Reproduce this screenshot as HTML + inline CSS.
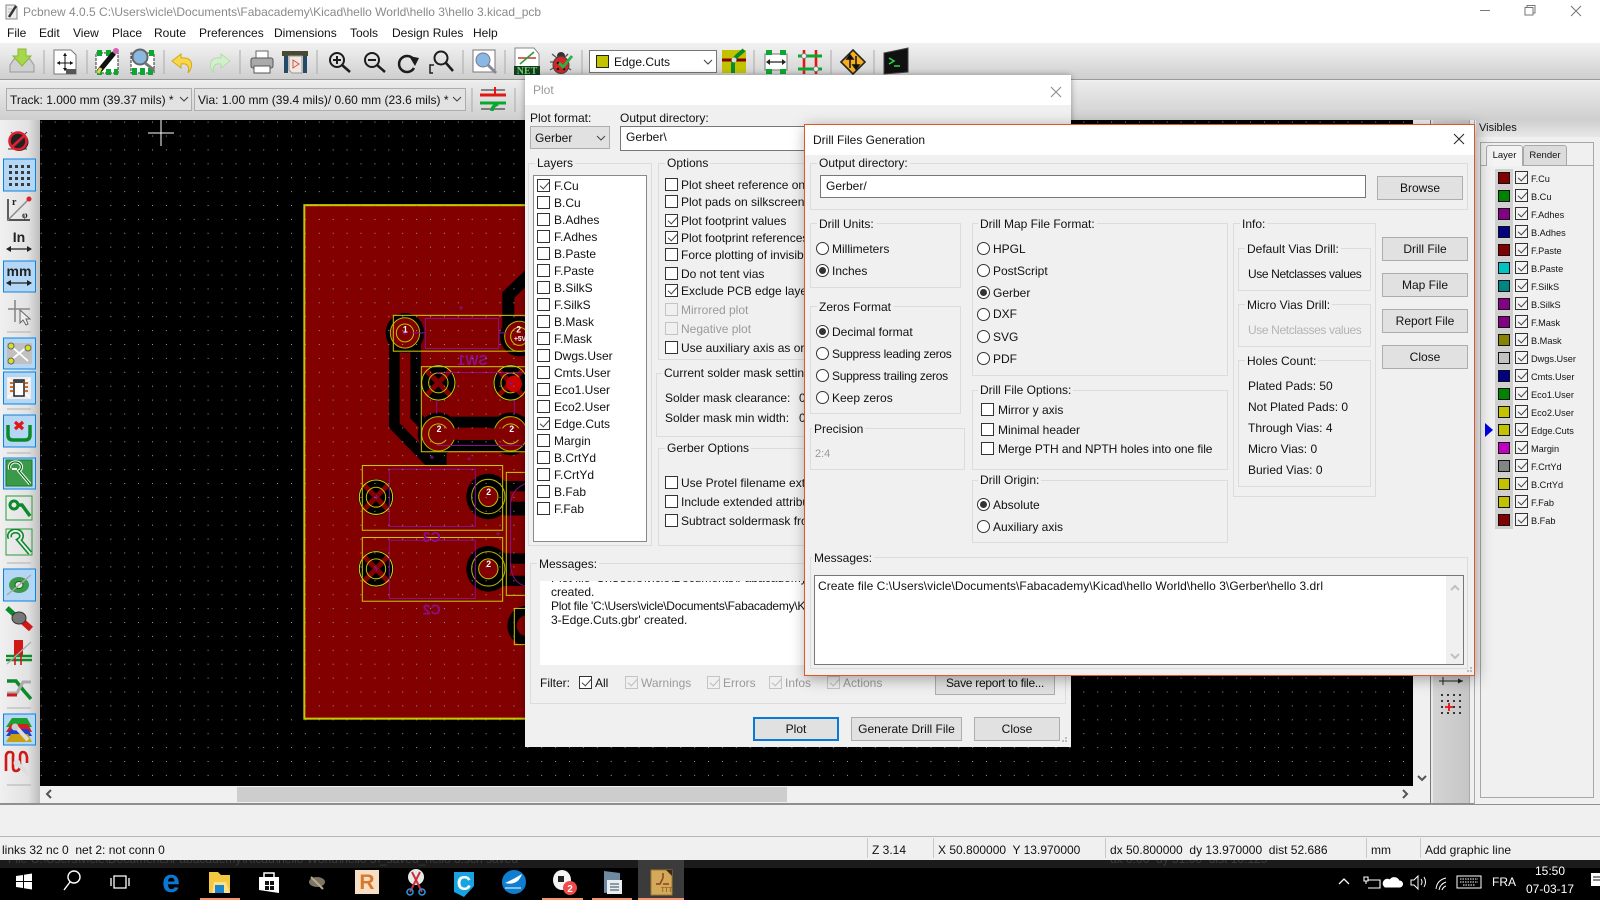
<!DOCTYPE html>
<html><head><meta charset="utf-8"><title>Pcbnew</title>
<style>
html,body{margin:0;padding:0;width:1600px;height:900px;overflow:hidden;background:#f0f0f0}
body{position:relative;font:12px/14px "Liberation Sans",sans-serif;color:#111}
div,span,b,u,s,i{position:absolute;display:block;box-sizing:border-box;text-decoration:none;font-style:normal;font-weight:normal}
svg{position:absolute;left:0;top:0}
.t{white-space:nowrap;height:14px}
.g{border:1px solid #dcdcdc}
.l{white-space:nowrap;background:#f0f0f0;padding:0 2px;height:14px}
.c{width:13px;height:13px;background:#fff;border:1px solid #333}
.c.x::after{content:"";position:absolute;left:3.5px;top:0;width:4px;height:8px;border:solid #444;border-width:0 1.3px 1.3px 0;transform:rotate(42deg)}
.c.d{border-color:#c4c4c4;background:#f0f0f0}
.c.d::after{border-color:#bbb}
.r{width:13px;height:13px;border-radius:50%;background:#fff;border:1px solid #333}
.r.o::after{content:"";position:absolute;left:2px;top:2px;width:7px;height:7px;border-radius:50%;background:#333}
.btn{background:#e1e1e1;border:1px solid #adadad;text-align:center;line-height:22px;white-space:nowrap}
.gy{color:#9a9a9a}
.sw{left:1498px;width:12px;height:12px;border:1px solid #111;outline:3px solid #cfcfcf}
.k{left:1515px;width:13px;height:13px;border:1px solid #333;background:#f4f4f4}
.k::after{content:"";position:absolute;left:3.5px;top:0;width:4px;height:8px;border:solid #444;border-width:0 1.2px 1.2px 0;transform:rotate(42deg)}
.p{left:1531px;font-size:9.2px;margin-top:1px;white-space:nowrap;height:14px}
.st{font-size:12px}
.n{letter-spacing:-.27px}
</style></head><body>

<div style="left:0;top:0;width:1600px;height:43px;background:#fff"></div>
<div class="t" style="left:23px;top:5px;color:#8a8a8a;font-size:12px">Pcbnew 4.0.5 C:\Users\vicle\Documents\Fabacademy\Kicad\hello World\hello 3\hello 3.kicad_pcb</div>
<div class="t" style="left:7px;top:26px">File</div>
<div class="t" style="left:39px;top:26px">Edit</div>
<div class="t" style="left:73px;top:26px">View</div>
<div class="t" style="left:112px;top:26px">Place</div>
<div class="t" style="left:154px;top:26px">Route</div>
<div class="t" style="left:199px;top:26px">Preferences</div>
<div class="t" style="left:274px;top:26px">Dimensions</div>
<div class="t" style="left:350px;top:26px">Tools</div>
<div class="t" style="left:392px;top:26px">Design Rules</div>
<div class="t" style="left:473px;top:26px">Help</div>

<div style="left:0;top:43px;width:1600px;height:37px;background:linear-gradient(#f2f2f2,#cfcfcf);border-bottom:1px solid #9a9a9a"></div>
<div style="left:0;top:81px;width:1600px;height:39px;background:linear-gradient(#ececec,#cfcfcf)"></div>
<div style="left:6px;top:88px;width:186px;height:23px;background:#e2e2e2;border:1px solid #adadad"></div>
<div class="t" style="left:10px;top:93px">Track: 1.000 mm (39.37 mils) *</div>
<div style="left:194px;top:88px;width:272px;height:23px;background:#e2e2e2;border:1px solid #adadad"></div>
<div class="t" style="left:198px;top:93px">Via: 1.00 mm (39.4 mils)/ 0.60 mm (23.6 mils) *</div>
<div style="left:589px;top:50px;width:128px;height:23px;background:#fff;border:1px solid #777"></div>
<div style="left:596px;top:55px;width:13px;height:13px;background:#c2c200;border:1px solid #222"></div>
<div class="t" style="left:614px;top:55px">Edge.Cuts</div>

<!-- left toolbar -->
<div style="left:0;top:120px;width:40px;height:684px;background:linear-gradient(90deg,#f0f0f0,#e2e2e2 70%,#bdbdbd)"></div>
<!-- scrollbars and right toolbar -->
<div style="left:40px;top:786px;width:1390px;height:17px;background:#f0f0f0"></div>
<div style="left:237px;top:787px;width:550px;height:15px;background:#cdcdcd"></div>
<div style="left:1413px;top:120px;width:17px;height:683px;background:#f0f0f0"></div>
<div style="left:1430px;top:120px;width:3px;height:683px;background:#e8e8e8;border-left:1px solid #777"></div>
<div style="left:1433px;top:120px;width:37px;height:683px;background:linear-gradient(90deg,#d4d4d4,#c6c6c6);border-right:1px solid #aaa"></div>
<div style="left:0;top:803px;width:1600px;height:2px;background:#8f8f8f"></div>
<div style="left:0;top:805px;width:1600px;height:31px;background:#f0f0f0"></div>
<div style="left:0;top:836px;width:1600px;height:1px;background:#b5b5b5"></div>
<div style="left:0;top:837px;width:1600px;height:23px;background:#f0f0f0"></div>

<!-- canvas + icons -->
<svg width="1600" height="900" viewBox="0 0 1600 900">
<defs>
<pattern id="dots" x="291" y="205" width="13.9" height="13.9" patternUnits="userSpaceOnUse"><rect width="1" height="1" fill="#8f9f98"/></pattern>
<g id="th"><circle r="53" fill="#000"/><path d="M-40,-40L40,40M40,-40L-40,40" stroke="#820000" stroke-width="15"/><circle r="50" fill="none" stroke="#d8d800" stroke-width="3"/><circle r="29" fill="none" stroke="#c2c200" stroke-width="3"/></g>
<g id="pd"><circle r="66" fill="#000"/><circle r="28" fill="#820000"/><circle r="50" fill="none" stroke="#b4b400" stroke-width="3"/><circle r="29" fill="none" stroke="#c2c200" stroke-width="3"/></g>
</defs>
<rect x="40" y="120" width="1373" height="666" fill="#000"/>
<g transform="translate(290,190) scale(.3333,.3444)">
<rect x="43" y="44" width="760" height="1491" fill="#820000" stroke="#c8c800" stroke-width="6"/>
<path d="M345,415V670L425,750H470" fill="none" stroke="#000" stroke-width="96"/>
<path d="M345,415V670L425,750H470" fill="none" stroke="#820000" stroke-width="32"/>
<path d="M445,708H720" fill="none" stroke="#000" stroke-width="100"/>
<path d="M445,708H720" fill="none" stroke="#820000" stroke-width="36"/>
<path d="M725,240L655,305V420" fill="none" stroke="#000" stroke-width="36"/>
<rect x="640" y="845" width="90" height="30" fill="#000"/><rect x="640" y="905" width="90" height="40" fill="#000"/>
<rect x="640" y="1055" width="90" height="30" fill="#000"/><rect x="640" y="1120" width="90" height="30" fill="#000"/>
<circle cx="345" cy="415" r="58" fill="#000"/><circle cx="345" cy="415" r="44" fill="#820000" stroke="#b4b400" stroke-width="3"/><circle cx="345" cy="415" r="26" fill="none" stroke="#c2c200" stroke-width="3"/>
<circle cx="688" cy="425" r="58" fill="#000"/><circle cx="688" cy="425" r="44" fill="#820000" stroke="#b4b400" stroke-width="3"/><circle cx="688" cy="425" r="26" fill="none" stroke="#c2c200" stroke-width="3"/>
<use href="#th" x="445" y="560"/><use href="#th" x="662" y="560"/>
<circle cx="672" cy="563" r="24" fill="#c80000"/>
<circle cx="445" cy="708" r="62" fill="#000"/><circle cx="445" cy="708" r="50" fill="#820000" stroke="#b4b400" stroke-width="3"/><circle cx="445" cy="708" r="29" fill="none" stroke="#c2c200" stroke-width="3"/>
<circle cx="662" cy="708" r="62" fill="#000"/><circle cx="662" cy="708" r="50" fill="#820000" stroke="#b4b400" stroke-width="3"/><circle cx="662" cy="708" r="29" fill="none" stroke="#c2c200" stroke-width="3"/>
<path d="M445,692H720V725H445Z" fill="#820000"/>
<use href="#th" x="258" y="892"/><use href="#th" x="258" y="1100"/>
<use href="#pd" x="595" y="890"/><use href="#pd" x="595" y="1100"/>
<circle cx="710" cy="1265" r="58" fill="#000"/><circle cx="710" cy="1265" r="30" fill="#820000"/>
<g fill="none" stroke="#c8c800" stroke-width="3">
<rect x="310" y="364" width="430" height="104"/><rect x="394" y="513" width="340" height="247"/>
<rect x="217" y="800" width="421" height="188"/><rect x="217" y="1009" width="421" height="185"/>
<rect x="649" y="820" width="90" height="357"/><rect x="673" y="1215" width="70" height="105"/>
</g>
<g fill="none" stroke="#8a108a" stroke-width="3">
<rect x="406" y="373" width="220" height="87"/><rect x="298" y="811" width="258" height="166"/><rect x="298" y="1017" width="258" height="169"/>
<path d="M440,530H700M440,742H700M440,610V650M673,610V650M365,415H406M626,415H650"/>
<path d="M730,845Q665,860 662,910V1090Q665,1150 730,1155"/>
<path d="M507,342h12M513,336v12M420,776h12M426,770v12M531,781h12M537,775v12M618,998h12M624,992v12M252,892h14M259,885v14M252,1100h14M259,1093v14M337,415h14M344,408v14M656,562h14M663,555v14"/>
</g>
<g fill="#8a108a" font-family="Liberation Sans" font-size="42" font-weight="bold" text-anchor="middle">
<text transform="translate(548,478) scale(-1,1)" dy="30">SW1</text>
<text transform="translate(425,990) scale(-1,1)" dy="32">C3</text>
<text transform="translate(425,1200) scale(-1,1)" dy="32">C2</text>
</g>
<g fill="#fff" font-family="Liberation Sans" font-size="26" font-weight="bold" text-anchor="middle">
<text x="346" y="414">1</text><text x="686" y="414">2</text><text x="447" y="702">2</text><text x="665" y="702">2</text><text x="596" y="886">2</text><text x="596" y="1094">2</text>
<text x="690" y="438" font-size="20">+5V</text>
</g>
</g>
<rect x="40" y="120" width="1373" height="666" fill="url(#dots)"/>
<!-- cursor -->
<path d="M148,133H174M161,120V146" stroke="#fff" stroke-width="1"/>

<!-- scroll arrows -->
<g fill="none" stroke="#555" stroke-width="2">
<path d="M51,790l-4,4l4,4M1403,790l4,4l-4,4"/><path d="M1418,776l4,4l4,-4"/>
</g>
<!-- top toolbar separators -->
<g stroke="#aaa"><path d="M44,50V74M87,50V74M164,50V74M240,50V74M317,50V74M463,50V74M505,50V74M582,50V74M754,50V74M831,50V74M874,50V74M472,88V112M515,88V112"/></g>
<!-- combos chevrons -->
<g fill="none" stroke="#444" stroke-width="1.1"><path d="M180,97l4,4l4,-4M453,97l4,4l4,-4M704,60l4,4l4,-4"/></g>

<!-- load -->
<g transform="translate(22,61)"><path d="M-12,4L-8,-2H8L12,4V11H-12Z" fill="#d0d0d0" stroke="#999"/><path d="M-4,-12H4V-5H9L0,5L-9,-5H-4Z" fill="#a6d84a" stroke="#88b838"/></g>
<!-- page -->
<g transform="translate(65,62)"><path d="M-11,-12H6L11,-7V12H-11Z" fill="#fff" stroke="#777"/><path d="M-8,1H8M0,-9V9" stroke="#111"/><path d="M-8,1l3,-2v4zM8,1l-3,-2v4zM0,-9l-2,3h4zM0,9l-2,-3h4z" fill="#111"/><rect x="1" y="7" width="10" height="5" fill="#555"/></g>
<!-- pcb edit -->
<g transform="translate(107,62)"><rect x="-11" y="-9" width="22" height="20" fill="#fff" stroke="#333" stroke-dasharray="3 1"/><path d="M-10,-12h5v6h-5zM-1,-12h5v6h-5zM-10,7h5v6h-5zM-1,7h5v6h-5zM7,7h4v6h-4z" fill="#0ba82f"/><path d="M-7,8L7,-9" stroke="#111" stroke-width="5"/><path d="M-9,11l3,-5" stroke="#e8d24a" stroke-width="3"/><circle cx="9" cy="-11" r="3" fill="#d45fb0"/></g>
<!-- pcb zoom -->
<g transform="translate(142,62)"><rect x="-11" y="-9" width="23" height="20" fill="#fff" stroke="#333" stroke-dasharray="3 1"/><path d="M-10,6h5v7h-5zM-2,6h5v7h-5zM6,6h5v7h-5zM7,-12h5v6h-5z" fill="#0ba82f"/><circle cx="-2" cy="-5" r="7.5" fill="#8ab8e0" stroke="#666" stroke-width="2"/><path d="M3,1L12,8" stroke="#777" stroke-width="3"/></g>
<!-- undo/redo -->
<g transform="translate(183,63)"><path d="M-2,-9L-11,-2L-2,5V1C4,0 7,3 5,10C11,3 10,-6 -2,-5Z" fill="#f6d848" stroke="#d0a820"/></g>
<g transform="translate(219,63)"><path d="M2,-9L11,-2L2,5V1C-4,0 -7,3 -5,10C-11,3 -10,-6 2,-5Z" fill="#d3f0cc" stroke="#b0dca8"/></g>
<!-- print -->
<g transform="translate(262,62)"><rect x="-6" y="-11" width="12" height="8" fill="#fff" stroke="#666"/><rect x="-11" y="-4" width="22" height="10" rx="2" fill="#aaa" stroke="#555"/><rect x="-8" y="4" width="16" height="7" fill="#fff" stroke="#555"/></g>
<!-- plotter -->
<g transform="translate(295,62)"><rect x="-13" y="-11" width="26" height="5" fill="#4a4a32"/><rect x="-11" y="-6" width="4" height="17" fill="#234a66"/><rect x="8" y="-6" width="4" height="17" fill="#234a66"/><path d="M-6,-6H7V11H-3L-6,8Z" fill="#f2e8e0" stroke="#999"/><path d="M-2,-2l6,4l-6,4z" fill="none" stroke="#c55"/></g>
<!-- zooms -->
<g fill="none" stroke="#1c1c1c"><g transform="translate(337,60)"><circle r="7" stroke-width="2"/><path d="M-4,0H4M0,-4V4" stroke-width="2"/><path d="M5,5L13,12" stroke-width="2.5"/></g>
<g transform="translate(372,60)"><circle r="7" stroke-width="2"/><path d="M-4,0H4" stroke-width="2"/><path d="M5,5L13,12" stroke-width="2.5"/></g>
<g transform="translate(407,63)"><path d="M7,-3A8,8 0 1 0 7,5" stroke-width="2.5"/><path d="M2,-7L12,-5L8,3Z" fill="#1c1c1c" stroke="none"/></g>
<g transform="translate(441,61)"><circle cy="-3" r="6.5" stroke-width="2"/><path d="M5,2L12,10" stroke-width="2.5"/><path d="M-7,4H-11V12H-8M-1,12" stroke-width="1.5"/></g></g>
<!-- find -->
<g transform="translate(484,61)"><rect x="-11" y="-11" width="22" height="22" fill="#fff" stroke="#777"/><circle cx="-1" cy="-1" r="7" fill="#8ab8e4" stroke="#778"/><path d="M4,4L12,12" stroke="#889" stroke-width="3"/></g>
<!-- NET -->
<g transform="translate(527,60)"><path d="M-12,-12H7L12,-6V7H-12Z" fill="#fff" stroke="#888"/><path d="M-9,-2H9" stroke="#c33" stroke-width="1.5"/><path d="M-7,4L7,-8" stroke="#2a9a3a" stroke-width="1.5"/><rect x="-13" y="6" width="26" height="9" fill="#143c1e"/><text x="0" y="14" font-family="Liberation Serif" font-size="10" font-weight="bold" fill="#6fd36f" text-anchor="middle">NET</text></g>
<!-- bug -->
<g transform="translate(561,62)"><path d="M-9,-8L-4,-4M7,-8L3,-4M-11,0H-6M-11,8L-6,5M10,8L6,5" stroke="#555" stroke-width="1.3"/><circle cy="-6" r="4" fill="#333"/><ellipse cy="3" rx="8" ry="8.5" fill="#d42626" stroke="#444"/><circle cx="-3" cy="1" r="1.3" fill="#111"/><circle cx="-3" cy="7" r="1.3" fill="#111"/><circle cx="3" cy="7" r="1.3" fill="#111"/><path d="M-2,1L2,5L11,-6" fill="none" stroke="#2bb045" stroke-width="2.8"/></g>
<!-- track icon -->
<g transform="translate(722,50)"><rect width="24" height="23" fill="#c2c200"/><path d="M0,10H24" stroke="#840000" stroke-width="3"/><path d="M11,23V14Q11,10 15,6L22,0" fill="none" stroke="#0b8a2a" stroke-width="4"/><circle cx="12" cy="10" r="2.5" fill="#ddd"/></g>
<!-- pad resize -->
<g transform="translate(776,62)"><rect x="-11" y="-8" width="22" height="16" fill="#fff" stroke="#777"/><path d="M-10,-12h6v5h-6zM4,-12h6v5h-6zM-10,7h6v5h-6zM4,7h6v5h-6z" fill="#0ba82f"/><path d="M-9,0H9" stroke="#222" stroke-width="1.3"/><path d="M-10,0l4,-3v6zM10,0l-4,-3v6z" fill="#222"/></g>
<!-- ratsnest grid -->
<g transform="translate(810,62)"><path d="M-6,-12V12M6,-12V12" stroke="#e31616" stroke-width="2.6"/><path d="M-12,-6H12M-12,7H12" stroke="#0ba82f" stroke-width="3"/><circle cx="-6" cy="-6" r="2.5" fill="#eee" stroke="#777"/><circle cx="6" cy="7" r="2.5" fill="#eee" stroke="#777"/></g>
<!-- diamond -->
<g transform="translate(853,62)"><rect x="-8.5" y="-8.5" width="17" height="17" transform="rotate(45)" fill="#f6ae1a" stroke="#222" stroke-width="1.6"/><path d="M-3,6V-6M-3,-7l-3,4h6zM3,-6V6M3,7l-3,-4h6z" stroke="#111" stroke-width="1.5" fill="#111"/></g>
<!-- terminal -->
<g transform="translate(896,61)"><path d="M-12,-8L12,-13V11L-12,13Z" fill="#111" stroke="#444"/><path d="M-7,-3L-2,0L-7,3M-2,5H4" fill="none" stroke="#2fd34a" stroke-width="1.6"/></g>
<!-- DRC switch -->
<g transform="translate(493,99)"><path d="M-12,-9H12M-12,10H12" stroke="#222"/><path d="M-13,-4H13" stroke="#e31616" stroke-width="3"/><path d="M-13,4H13" stroke="#0ba82f" stroke-width="3"/><path d="M2,-12V-5" stroke="#e31616" stroke-width="2"/><path d="M-1,12Q-1,7 5,5" stroke="#0ba82f" stroke-width="3.5" fill="none"/></g>

<!-- left toolbar frames -->
<g fill="#b4d7f6" stroke="#0a84e0" stroke-width="1">
<rect x="3.5" y="159" width="32" height="32"/><rect x="3.5" y="261" width="32" height="31"/><rect x="3.5" y="338" width="32" height="31"/><rect x="3.5" y="372" width="32" height="32"/>
<rect x="3.5" y="415" width="32" height="32"/><rect x="3.5" y="458" width="32" height="31"/><rect x="3.5" y="569" width="32" height="32"/><rect x="3.5" y="714" width="32" height="31"/>
</g>
<g stroke="#b0b0b0"><path d="M7,332H31M7,409H31M7,453H31M7,563H31M7,708H31M7,785H31"/></g>
<!-- bug off -->
<g transform="translate(19,141)"><path d="M-8,-9L-4,-5M8,-9L4,-5M-11,8L8,8" stroke="#555" stroke-width="1.2"/><ellipse cy="1" rx="9.5" ry="9" fill="#222"/><circle cx="-1" r="8.5" fill="none" stroke="#e02030" stroke-width="2.6"/><path d="M-7,6L6,-6" stroke="#e02030" stroke-width="2.6"/></g>
<!-- grid -->
<g transform="translate(19,175)" fill="#3a3a3a"><path d="M-10,-10h3v3h-3zM-4,-10h3v3h-3zM2,-10h3v3h-3zM8,-10h3v3h-3zM-10,-4h3v3h-3zM-4,-4h3v3h-3zM2,-4h3v3h-3zM8,-4h3v3h-3zM-10,2h3v3h-3zM-4,2h3v3h-3zM2,2h3v3h-3zM8,2h3v3h-3zM-10,8h3v3h-3zM-4,8h3v3h-3zM2,8h3v3h-3zM8,8h3v3h-3z"/></g>
<!-- polar -->
<g transform="translate(19,209)"><path d="M-11,-10V11H11" fill="none" stroke="#222" stroke-width="1.4"/><path d="M-11,11L9,-9" stroke="#888" stroke-width="1.4"/><circle cx="10" cy="-10" r="2.5" fill="#e02020"/><text x="-7" y="-4" font-family="Liberation Serif" font-size="10" font-weight="bold" fill="#222">r</text><text x="3" y="9" font-family="Liberation Serif" font-size="9" font-weight="bold" fill="#222">φ</text></g>
<!-- In -->
<g transform="translate(19,242)"><text x="0" y="0" font-family="Liberation Sans" font-size="14" font-weight="bold" fill="#222" text-anchor="middle">In</text><path d="M-12,7H12" stroke="#222" stroke-width="1.3"/><path d="M-13,7l5,-3v6zM13,7l-5,-3v6z" fill="#222"/></g>
<!-- mm -->
<g transform="translate(19,276)"><text x="0" y="0" font-family="Liberation Sans" font-size="14" font-weight="bold" fill="#222" text-anchor="middle">mm</text><path d="M-12,7H12" stroke="#222" stroke-width="1.3"/><path d="M-13,7l5,-3v6zM13,7l-5,-3v6z" fill="#222"/></g>
<!-- cursor tool -->
<g transform="translate(19,312)"><path d="M-11,-3H11M-4,-12V10" stroke="#888" stroke-width="1.6"/><path d="M1,-2V11L4,8L7,13L9,12L7,7H11Z" fill="#eee" stroke="#666"/></g>
<!-- ratsnest -->
<g transform="translate(19,353)"><rect x="-12" y="-10" width="25" height="21" fill="#c0c0c0"/><path d="M-8,-7L9,8M8,-6L-8,7" stroke="#fff" stroke-width="1.8"/><circle cx="-8" cy="-7" r="3" fill="#d8e020" stroke="#666"/><circle cx="9" cy="-5" r="3" fill="#d8e020" stroke="#666"/><circle cx="-8" cy="8" r="3" fill="#d8e020" stroke="#666"/></g>
<!-- module ratsnest -->
<g transform="translate(19,388)"><rect x="-12" y="-11" width="24" height="22" fill="#eee"/><path d="M-11,-9L-5,-5M11,-9L5,-5M-11,9L-5,5M11,9L5,5" stroke="#fff" stroke-width="1.4"/><rect x="-5" y="-8" width="10" height="16" fill="#fff" stroke="#222" stroke-width="1.5"/><rect x="-4" y="-8" width="8" height="3" fill="#444"/><path d="M-9,-5h3M-9,-1h3M-9,3h3M6,-5h3M6,-1h3M6,3h3" stroke="#d86b1c" stroke-width="2"/></g>
<!-- del track -->
<g transform="translate(19,431)"><path d="M-11,-6V4Q-11,9 -6,9H6Q11,9 11,4V-6" fill="none" stroke="#0b8a2a" stroke-width="3.5"/><path d="M-4,-9L4,-2M4,-9L-4,-2" stroke="#e31616" stroke-width="3.2"/></g>
<!-- zone icons -->
<g transform="translate(19,473)"><rect x="-13" y="-13" width="26" height="26" fill="#3a9a4a" stroke="#1a7a2a"/><path d="M-9,-4A6,5 0 1 1 0,-2L11,11" fill="none" stroke="#fff" stroke-width="3.2"/><path d="M-7,-4h5" stroke="#fff" stroke-width="2"/><path d="M-9,-4A6,5 0 1 1 0,-2L11,11" fill="none" stroke="#0a6a1a" stroke-width="1.2"/></g>
<g transform="translate(19,508)"><rect x="-13" y="-12" width="26" height="24" fill="none" stroke="#2a9a3a"/><circle cx="-5" cy="-3" r="4" fill="none" stroke="#0b8a2a" stroke-width="3"/><path d="M-1,-3H3L11,8" fill="none" stroke="#0b8a2a" stroke-width="3.4"/></g>
<g transform="translate(19,542)"><rect x="-13" y="-13" width="26" height="26" fill="none" stroke="#2a9a3a"/><path d="M-9,-4A6,5 0 1 1 0,-2L11,11" fill="none" stroke="#0b8a2a" stroke-width="5"/><path d="M-9,-4A6,5 0 1 1 0,-2L11,11" fill="none" stroke="#eee" stroke-width="1.8"/></g>
<!-- via etc -->
<g transform="translate(19,585)"><ellipse rx="10" ry="8" fill="#3d9a4b"/><ellipse rx="4" ry="3.5" fill="#e8e8e8" stroke="#0b6a1a"/><path d="M-12,10L12,-10" stroke="#aaa" stroke-width="1.4"/></g>
<g transform="translate(19,618)"><path d="M-12,-10L-1,0" stroke="#0b8a2a" stroke-width="5"/><path d="M1,1L12,11" stroke="#d01818" stroke-width="6"/><ellipse cy="0" rx="7" ry="6" fill="#777" stroke="#333"/></g>
<g transform="translate(19,653)"><rect x="-5" y="-13" width="9" height="15" fill="#d01818"/><path d="M-13,3H13M-13,7H13" stroke="#0b8a2a" stroke-width="2.4"/><path d="M-4,2V12M2,2V12" stroke="#d01818" stroke-width="1.6"/><path d="M-12,11L12,-11" stroke="#aaa" stroke-width="1.2"/></g>
<g transform="translate(19,688)"><path d="M-12,-7H-3L5,3L12,11" fill="none" stroke="#0b8a2a" stroke-width="3.5"/><path d="M-12,5H-2L4,-6H12" fill="none" stroke="#aaa" stroke-width="3"/><path d="M-12,7H-2" stroke="#d01818" stroke-width="3"/></g>
<!-- layers + wrench -->
<g transform="translate(19,730)"><path d="M-13,-3L-7,-12H8L13,-3Z" fill="#1ba030"/><path d="M-13,2L-8,-6H9L13,2Z" fill="#d02020"/><path d="M-13,6L-8,-1H9L13,6Z" fill="#2040d0"/><path d="M-13,12L-8,4H9L13,12Z" fill="#c8a010"/><path d="M-3,-3L9,10" stroke="#ddd" stroke-width="4"/><circle cx="-4" cy="-3" r="3.5" fill="#ccc"/></g>
<g transform="translate(19,763)"><path d="M-13,8V-6Q-13,-11 -9,-11T-6,-6V4Q-6,8 -3,8T1,4V-6Q1,-11 4,-11T8,-6V0" fill="none" stroke="#d01818" stroke-width="2.6"/><path d="M-2,0L10,12" stroke="#ddd" stroke-width="4"/><circle cx="-2" cy="0" r="3.5" fill="#ddd"/></g>
<!-- right toolbar icons -->
<g transform="translate(1451,681)"><path d="M-12,0H12M-8,-4V4" stroke="#222"/><path d="M12,0l-5,-2.5v5z" fill="#222"/></g>
<g transform="translate(1451,704)" fill="#333"><path d="M-10,-10h2v2h-2zM-4,-10h2v2h-2zM2,-10h2v2h-2zM8,-10h2v2h-2zM-10,-4h2v2h-2zM-4,-4h2v2h-2zM2,-4h2v2h-2zM8,-4h2v2h-2zM-10,2h2v2h-2zM2,2h2v2h-2zM8,2h2v2h-2zM-10,8h2v2h-2zM-4,8h2v2h-2zM2,8h2v2h-2zM8,8h2v2h-2z"/><path d="M-6,3H2M-2,-1V7" stroke="#e31616" stroke-width="1.8"/></g>
<!-- app icon -->
<g transform="translate(11,12)"><path d="M-5,-7H4L6,-5V7H-5Z" fill="#eee" stroke="#888"/><path d="M-2,5L5,-6" stroke="#333" stroke-width="2.5"/><path d="M-3,-3h4M-3,0h3" stroke="#bbb"/></g>
<!-- window controls -->
<g stroke="#777" fill="none"><path d="M1480,10.5H1490"/><path d="M1525,7.5H1533V15H1525ZM1527,7.5V5.5H1535V13H1533"/><path d="M1571,6L1581,16M1581,6L1571,16"/></g>
</svg>

<!-- status -->
<div class="t st" style="left:2px;top:843px">links 32 nc 0&nbsp; net 2: not conn 0</div>
<div style="left:867px;top:838px;width:1px;height:20px;background:#c8c8c8"></div>
<div class="t st" style="left:872px;top:843px">Z 3.14</div>
<div style="left:933px;top:838px;width:1px;height:20px;background:#c8c8c8"></div>
<div class="t st" style="left:938px;top:843px">X 50.800000&nbsp; Y 13.970000</div>
<div style="left:1105px;top:838px;width:1px;height:20px;background:#c8c8c8"></div>
<div class="t st" style="left:1110px;top:843px">dx 50.800000&nbsp; dy 13.970000&nbsp; dist 52.686</div>
<div style="left:1366px;top:838px;width:1px;height:20px;background:#c8c8c8"></div>
<div class="t st" style="left:1371px;top:843px">mm</div>
<div style="left:1420px;top:838px;width:1px;height:20px;background:#c8c8c8"></div>
<div class="t st" style="left:1425px;top:843px">Add graphic line</div>

<!-- visibles -->
<div style="left:1474px;top:120px;width:126px;height:684px;background:#f0f0f0;border-left:1px solid #aaa"></div>
<div style="left:1476px;top:120px;width:124px;height:17px;background:linear-gradient(#cfcfcf,#e8e8e8)"></div>
<div class="t" style="left:1479px;top:121px;font-size:11px">Visibles</div>
<div style="left:1480px;top:142px;width:114px;height:656px;border:1px solid #a8a8a8"></div>
<div style="left:1480px;top:165px;width:114px;height:1px;background:#a8a8a8"></div>
<div style="left:1486px;top:145px;width:37px;height:21px;background:#f4f4f4;border:1px solid #a8a8a8;border-bottom:0;border-radius:3px 3px 0 0;font-size:9.5px;line-height:20px;text-align:center">Layer</div>
<div style="left:1523px;top:145px;width:44px;height:20px;background:#dcdcdc;border:1px solid #a8a8a8;border-bottom:0;border-radius:3px 3px 0 0;font-size:9.5px;line-height:19px;text-align:center">Render</div>
<div style="left:1485px;top:423px;width:0;height:0;border-left:8px solid #0000e0;border-top:7px solid transparent;border-bottom:7px solid transparent"></div>

<s class="sw" style="top:172px;background:#840000"></s><i class="k" style="top:171px"></i><span class="p" style="top:171px">F.Cu</span>
<s class="sw" style="top:190px;background:#008400"></s><i class="k" style="top:189px"></i><span class="p" style="top:189px">B.Cu</span>
<s class="sw" style="top:208px;background:#840084"></s><i class="k" style="top:207px"></i><span class="p" style="top:207px">F.Adhes</span>
<s class="sw" style="top:226px;background:#000084"></s><i class="k" style="top:225px"></i><span class="p" style="top:225px">B.Adhes</span>
<s class="sw" style="top:244px;background:#840000"></s><i class="k" style="top:243px"></i><span class="p" style="top:243px">F.Paste</span>
<s class="sw" style="top:262px;background:#00c2c2"></s><i class="k" style="top:261px"></i><span class="p" style="top:261px">B.Paste</span>
<s class="sw" style="top:280px;background:#008484"></s><i class="k" style="top:279px"></i><span class="p" style="top:279px">F.SilkS</span>
<s class="sw" style="top:298px;background:#840084"></s><i class="k" style="top:297px"></i><span class="p" style="top:297px">B.SilkS</span>
<s class="sw" style="top:316px;background:#840084"></s><i class="k" style="top:315px"></i><span class="p" style="top:315px">F.Mask</span>
<s class="sw" style="top:334px;background:#848400"></s><i class="k" style="top:333px"></i><span class="p" style="top:333px">B.Mask</span>
<s class="sw" style="top:352px;background:#c2c2c2"></s><i class="k" style="top:351px"></i><span class="p" style="top:351px">Dwgs.User</span>
<s class="sw" style="top:370px;background:#000084"></s><i class="k" style="top:369px"></i><span class="p" style="top:369px">Cmts.User</span>
<s class="sw" style="top:388px;background:#008400"></s><i class="k" style="top:387px"></i><span class="p" style="top:387px">Eco1.User</span>
<s class="sw" style="top:406px;background:#c2c200"></s><i class="k" style="top:405px"></i><span class="p" style="top:405px">Eco2.User</span>
<s class="sw" style="top:424px;background:#c2c200"></s><i class="k" style="top:423px"></i><span class="p" style="top:423px">Edge.Cuts</span>
<s class="sw" style="top:442px;background:#c200c2"></s><i class="k" style="top:441px"></i><span class="p" style="top:441px">Margin</span>
<s class="sw" style="top:460px;background:#848484"></s><i class="k" style="top:459px"></i><span class="p" style="top:459px">F.CrtYd</span>
<s class="sw" style="top:478px;background:#c2c200"></s><i class="k" style="top:477px"></i><span class="p" style="top:477px">B.CrtYd</span>
<s class="sw" style="top:496px;background:#c2c200"></s><i class="k" style="top:495px"></i><span class="p" style="top:495px">F.Fab</span>
<s class="sw" style="top:514px;background:#840000"></s><i class="k" style="top:513px"></i><span class="p" style="top:513px">B.Fab</span>

<!-- PLOT dialog -->
<div style="left:525px;top:75px;width:546px;height:672px;background:#f0f0f0;box-shadow:0 0 6px rgba(0,0,0,.35)"></div>
<div style="left:525px;top:75px;width:546px;height:30px;background:#fff"></div>
<div class="t" style="left:533px;top:83px;color:#999">Plot</div>
<svg width="1600" height="110"><path d="M1051,87L1061,97M1061,87L1051,97" stroke="#888" fill="none"/></svg>
<div class="t" style="left:530px;top:111px">Plot format:</div>
<div class="t" style="left:620px;top:111px">Output directory:</div>
<div style="left:530px;top:126px;width:80px;height:23px;background:#e1e1e1;border:1px solid #adadad"></div>
<div class="t" style="left:535px;top:131px">Gerber</div>
<svg width="1600" height="150"><path d="M597,136l4,4l4,-4" fill="none" stroke="#444"/></svg>
<div style="left:620px;top:126px;width:300px;height:25px;background:#fff;border:1px solid #777"></div>
<div class="t" style="left:626px;top:130px">Gerber\</div>

<u class="g" style="left:528px;top:163px;width:124px;height:383px"></u>
<span class="l" style="left:535px;top:156px">Layers</span>
<div style="left:533px;top:175px;width:114px;height:367px;background:#fff;border:1px solid #8a8a8a"></div>
<b class="c x" style="left:537px;top:179px"></b><span class="t" style="left:554px;top:179px">F.Cu</span>
<b class="c" style="left:537px;top:196px"></b><span class="t" style="left:554px;top:196px">B.Cu</span>
<b class="c" style="left:537px;top:213px"></b><span class="t" style="left:554px;top:213px">B.Adhes</span>
<b class="c" style="left:537px;top:230px"></b><span class="t" style="left:554px;top:230px">F.Adhes</span>
<b class="c" style="left:537px;top:247px"></b><span class="t" style="left:554px;top:247px">B.Paste</span>
<b class="c" style="left:537px;top:264px"></b><span class="t" style="left:554px;top:264px">F.Paste</span>
<b class="c" style="left:537px;top:281px"></b><span class="t" style="left:554px;top:281px">B.SilkS</span>
<b class="c" style="left:537px;top:298px"></b><span class="t" style="left:554px;top:298px">F.SilkS</span>
<b class="c" style="left:537px;top:315px"></b><span class="t" style="left:554px;top:315px">B.Mask</span>
<b class="c" style="left:537px;top:332px"></b><span class="t" style="left:554px;top:332px">F.Mask</span>
<b class="c" style="left:537px;top:349px"></b><span class="t" style="left:554px;top:349px">Dwgs.User</span>
<b class="c" style="left:537px;top:366px"></b><span class="t" style="left:554px;top:366px">Cmts.User</span>
<b class="c" style="left:537px;top:383px"></b><span class="t" style="left:554px;top:383px">Eco1.User</span>
<b class="c" style="left:537px;top:400px"></b><span class="t" style="left:554px;top:400px">Eco2.User</span>
<b class="c x" style="left:537px;top:417px"></b><span class="t" style="left:554px;top:417px">Edge.Cuts</span>
<b class="c" style="left:537px;top:434px"></b><span class="t" style="left:554px;top:434px">Margin</span>
<b class="c" style="left:537px;top:451px"></b><span class="t" style="left:554px;top:451px">B.CrtYd</span>
<b class="c" style="left:537px;top:468px"></b><span class="t" style="left:554px;top:468px">F.CrtYd</span>
<b class="c" style="left:537px;top:485px"></b><span class="t" style="left:554px;top:485px">B.Fab</span>
<b class="c" style="left:537px;top:502px"></b><span class="t" style="left:554px;top:502px">F.Fab</span>

<u class="g" style="left:658px;top:163px;width:160px;height:197px"></u>
<span class="l" style="left:665px;top:156px">Options</span>
<b class="c" style="left:665px;top:178px"></b><span class="t" style="left:681px;top:178px">Plot sheet reference on pcb</span>
<b class="c" style="left:665px;top:195px"></b><span class="t" style="left:681px;top:195px">Plot pads on silkscreen</span>
<b class="c x" style="left:665px;top:214px"></b><span class="t" style="left:681px;top:214px">Plot footprint values</span>
<b class="c x" style="left:665px;top:231px"></b><span class="t" style="left:681px;top:231px">Plot footprint references</span>
<b class="c" style="left:665px;top:248px"></b><span class="t" style="left:681px;top:248px">Force plotting of invisible</span>
<b class="c" style="left:665px;top:267px"></b><span class="t" style="left:681px;top:267px">Do not tent vias</span>
<b class="c x" style="left:665px;top:284px"></b><span class="t" style="left:681px;top:284px">Exclude PCB edge layer</span>
<b class="c d" style="left:665px;top:303px"></b><span class="t gy" style="left:681px;top:303px">Mirrored plot</span>
<b class="c d" style="left:665px;top:322px"></b><span class="t gy" style="left:681px;top:322px">Negative plot</span>
<b class="c" style="left:665px;top:341px"></b><span class="t" style="left:681px;top:341px">Use auxiliary axis as origin</span>
<u class="g" style="left:656px;top:373px;width:160px;height:64px"></u>
<span class="l" style="left:662px;top:366px">Current solder mask settings</span>
<span class="t" style="left:665px;top:391px">Solder mask clearance:</span>
<span class="t" style="left:665px;top:411px">Solder mask min width:</span>
<span class="t" style="left:799px;top:391px">0</span><span class="t" style="left:799px;top:411px">0</span>
<u class="g" style="left:658px;top:448px;width:160px;height:98px"></u>
<span class="l" style="left:665px;top:441px">Gerber Options</span>
<b class="c" style="left:665px;top:476px"></b><span class="t" style="left:681px;top:476px">Use Protel filename extensions</span>
<b class="c" style="left:665px;top:495px"></b><span class="t" style="left:681px;top:495px">Include extended attributes</span>
<b class="c" style="left:665px;top:514px"></b><span class="t" style="left:681px;top:514px">Subtract soldermask from silk</span>

<u class="g" style="left:530px;top:563px;width:536px;height:141px"></u>
<span class="l" style="left:537px;top:557px">Messages:</span>
<div style="left:540px;top:581px;width:520px;height:84px;background:#fff;overflow:hidden">
<span class="t" style="left:11px;top:-10px">Plot file 'C:\Users\vicle\Documents\Fabacademy\Kicad</span>
<span class="t" style="left:11px;top:4px">created.</span>
<span class="t n" style="left:11px;top:18px">Plot file 'C:\Users\vicle\Documents\Fabacademy\Kicad</span>
<span class="t" style="left:11px;top:32px">3-Edge.Cuts.gbr' created.</span>
</div>
<span class="t" style="left:540px;top:676px">Filter:</span>
<b class="c x" style="left:579px;top:676px"></b><span class="t" style="left:595px;top:676px">All</span>
<b class="c x d" style="left:625px;top:676px"></b><span class="t gy" style="left:641px;top:676px">Warnings</span>
<b class="c x d" style="left:707px;top:676px"></b><span class="t gy" style="left:723px;top:676px">Errors</span>
<b class="c x d" style="left:769px;top:676px"></b><span class="t gy" style="left:785px;top:676px">Infos</span>
<b class="c x d" style="left:827px;top:676px"></b><span class="t gy" style="left:843px;top:676px">Actions</span>
<div class="btn n" style="left:935px;top:671px;width:120px;height:24px">Save report to file...</div>
<div class="btn" style="left:753px;top:717px;width:86px;height:24px;border:2px solid #0a78d8;line-height:20px">Plot</div>
<div class="btn" style="left:851px;top:717px;width:111px;height:24px">Generate Drill File</div>
<div class="btn" style="left:974px;top:717px;width:86px;height:24px">Close</div>

<!-- DRILL dialog -->
<div style="left:804px;top:124px;width:671px;height:552px;background:#f0f0f0;border:1px solid #e0562a;box-shadow:2px 3px 14px rgba(0,0,0,.35)"></div>
<div style="left:805px;top:125px;width:669px;height:30px;background:#fff"></div>
<div class="t" style="left:813px;top:133px">Drill Files Generation</div>
<svg width="1600" height="150"><path d="M1454,134L1464,144M1464,134L1454,144" stroke="#222" fill="none"/></svg>
<u class="g" style="left:810px;top:163px;width:658px;height:47px"></u>
<span class="l" style="left:817px;top:156px">Output directory:</span>
<div style="left:820px;top:175px;width:546px;height:23px;background:#fff;border:1px solid #777"></div>
<span class="t" style="left:826px;top:179px">Gerber/</span>
<div class="btn" style="left:1377px;top:176px;width:86px;height:24px">Browse</div>

<u class="g" style="left:810px;top:223px;width:151px;height:65px"></u>
<span class="l" style="left:817px;top:217px">Drill Units:</span>
<b class="r" style="left:816px;top:242px"></b><span class="t" style="left:832px;top:242px">Millimeters</span>
<b class="r o" style="left:816px;top:264px"></b><span class="t" style="left:832px;top:264px">Inches</span>

<u class="g" style="left:810px;top:306px;width:151px;height:108px"></u>
<span class="l" style="left:817px;top:300px">Zeros Format</span>
<b class="r o" style="left:816px;top:325px"></b><span class="t" style="left:832px;top:325px">Decimal format</span>
<b class="r" style="left:816px;top:347px"></b><span class="t n" style="left:832px;top:347px">Suppress leading zeros</span>
<b class="r" style="left:816px;top:369px"></b><span class="t n" style="left:832px;top:369px">Suppress trailing zeros</span>
<b class="r" style="left:816px;top:391px"></b><span class="t" style="left:832px;top:391px">Keep zeros</span>

<u class="g" style="left:810px;top:428px;width:155px;height:42px"></u>
<span class="l" style="left:812px;top:422px">Precision</span>
<span class="t gy" style="left:815px;top:447px;font-size:11px">2:4</span>

<u class="g" style="left:972px;top:223px;width:256px;height:153px"></u>
<span class="l" style="left:978px;top:217px">Drill Map File Format:</span>
<b class="r" style="left:977px;top:242px"></b><span class="t" style="left:993px;top:242px">HPGL</span>
<b class="r" style="left:977px;top:264px"></b><span class="t" style="left:993px;top:264px">PostScript</span>
<b class="r o" style="left:977px;top:286px"></b><span class="t" style="left:993px;top:286px">Gerber</span>
<b class="r" style="left:977px;top:308px"></b><span class="t" style="left:993px;top:307px">DXF</span>
<b class="r" style="left:977px;top:330px"></b><span class="t" style="left:993px;top:330px">SVG</span>
<b class="r" style="left:977px;top:352px"></b><span class="t" style="left:993px;top:352px">PDF</span>

<u class="g" style="left:972px;top:390px;width:256px;height:80px"></u>
<span class="l" style="left:978px;top:383px">Drill File Options:</span>
<b class="c" style="left:981px;top:403px"></b><span class="t" style="left:998px;top:403px">Mirror y axis</span>
<b class="c" style="left:981px;top:423px"></b><span class="t" style="left:998px;top:423px">Minimal header</span>
<b class="c" style="left:981px;top:442px"></b><span class="t" style="left:998px;top:442px;letter-spacing:-.08px">Merge PTH and NPTH holes into one file</span>

<u class="g" style="left:972px;top:480px;width:256px;height:63px"></u>
<span class="l" style="left:978px;top:473px">Drill Origin:</span>
<b class="r o" style="left:977px;top:498px"></b><span class="t" style="left:993px;top:498px">Absolute</span>
<b class="r" style="left:977px;top:520px"></b><span class="t" style="left:993px;top:520px">Auxiliary axis</span>

<u class="g" style="left:1233px;top:223px;width:143px;height:274px"></u>
<span class="l" style="left:1240px;top:217px">Info:</span>
<u class="g" style="left:1238px;top:248px;width:133px;height:43px"></u>
<span class="l" style="left:1245px;top:242px">Default Vias Drill:</span>
<span class="t" style="left:1248px;top:267px;letter-spacing:-.38px">Use Netclasses values</span>
<u class="g" style="left:1238px;top:304px;width:133px;height:43px"></u>
<span class="l" style="left:1245px;top:298px">Micro Vias Drill:</span>
<span class="t" style="left:1248px;top:323px;color:#b4b4b4;letter-spacing:-.38px">Use Netclasses values</span>
<u class="g" style="left:1238px;top:360px;width:133px;height:127px"></u>
<span class="l" style="left:1245px;top:354px">Holes Count:</span>
<span class="t" style="left:1248px;top:379px">Plated Pads: 50</span>
<span class="t" style="left:1248px;top:400px">Not Plated Pads: 0</span>
<span class="t" style="left:1248px;top:421px">Through Vias: 4</span>
<span class="t" style="left:1248px;top:442px">Micro Vias: 0</span>
<span class="t" style="left:1248px;top:463px">Buried Vias: 0</span>

<div class="btn" style="left:1382px;top:237px;width:86px;height:24px">Drill File</div>
<div class="btn" style="left:1382px;top:273px;width:86px;height:24px">Map File</div>
<div class="btn" style="left:1382px;top:309px;width:86px;height:24px">Report File</div>
<div class="btn" style="left:1382px;top:345px;width:86px;height:24px">Close</div>

<u class="g" style="left:810px;top:557px;width:658px;height:112px"></u>
<span class="l" style="left:812px;top:551px">Messages:</span>
<div style="left:814px;top:575px;width:650px;height:90px;background:#fff;border:1px solid #777"></div>
<div style="left:1446px;top:576px;width:17px;height:88px;background:#f0f0f0"></div>
<span class="t" style="left:818px;top:579px;letter-spacing:.055px">Create file C:\Users\vicle\Documents\Fabacademy\Kicad\hello World\hello 3\Gerber\hello 3.drl</span>
<svg width="1600" height="680"><path d="M1451,590l4,-4l4,4M1451,654l4,4l4,-4" fill="none" stroke="#c0c0c0" stroke-width="2"/><path d="M1470,667h2v2h-2zM1467,670h2v2h-2zM1470,670h2v2h-2z" fill="#bbb"/></svg>
<svg width="1600" height="750"><path d="M1065,737h2v2h-2zM1062,740h2v2h-2zM1065,740h2v2h-2z" fill="#bbb"/></svg>

<!-- taskbar -->
<div style="left:0;top:860px;width:1600px;height:40px;background:#000"></div>
<div style="left:0;top:860px;width:1600px;height:8px;background:#1b1b1b;overflow:hidden;color:#3c3c3c">
<span class="t" style="left:8px;top:-8px">File C:\Users\vicle\Documents\Fabacademy\Kicad\hello World\hello 3\_saved_hello 3.sch saved</span>
<span class="t" style="left:1110px;top:-8px">dx 0.00&nbsp; dy 51.00&nbsp; dist 10.125</span>
</div>
<div style="left:638px;top:860px;width:46px;height:40px;background:#3b3b3b"></div>
<div style="left:200px;top:898px;width:40px;height:2px;background:#f69470"></div>
<div style="left:542px;top:898px;width:41px;height:2px;background:#f69470"></div>
<div style="left:592px;top:898px;width:40px;height:2px;background:#f69470"></div>
<div style="left:638px;top:898px;width:46px;height:2px;background:#f69470"></div>
<svg width="1600" height="900">
<path d="M16,876L23,875V881H16ZM24,874.800L32,873.500V881H24ZM16,882H23V888L16,887ZM24,882H32V889.500L24,888.300Z" fill="#fff"/>
<circle cx="74" cy="877" r="6" fill="none" stroke="#fff" stroke-width="1.4"/><path d="M70,882L64,890" stroke="#fff" stroke-width="1.4"/>
<path d="M114,876H126V888H114Z M111,878V886M129,878V886" fill="none" stroke="#fff" stroke-width="1.3"/>
<text x="171" y="892" font-family="Liberation Sans" font-size="32" font-weight="bold" fill="#0a78d4" text-anchor="middle">e</text>
<path d="M209,872H218L221,875H230V893H209Z" fill="#f5c842"/><path d="M214,882H226L230,893H212Z" fill="#fbe08a"/><rect x="215" y="885" width="9" height="8" fill="#1a86d0"/>
<path d="M259,877H279V893L259,890Z" fill="#fff"/><path d="M264,877V873H274V877" fill="none" stroke="#fff" stroke-width="1.5"/><path d="M265,881h4v4h-4zM270,881h4v4h-4zM265,886h4v4h-4zM270,886h4v4h-4z" fill="#111"/>
<ellipse cx="317" cy="882" rx="8" ry="5" fill="#7d7464"/><path d="M311,877L323,889" stroke="#b8aa88" stroke-width="2"/>
<rect x="355" y="870" width="24" height="24" fill="#f6dfc4"/><text x="367" y="889" font-family="Liberation Sans" font-size="21" font-weight="bold" fill="#d8782a" text-anchor="middle">R</text>
<circle cx="416" cy="877" r="8" fill="#e8e8e8"/><path d="M412,872L422,892M420,872L410,892" stroke="#c8303a" stroke-width="2"/><circle cx="410" cy="892" r="3" fill="none" stroke="#2a90d8" stroke-width="1.6"/><circle cx="422" cy="892" r="3" fill="none" stroke="#2a90d8" stroke-width="1.6"/>
<path d="M454,872H474V886L464,897L454,892Z" fill="#18a4e0"/><text x="464" y="890" font-family="Liberation Sans" font-size="20" font-weight="bold" fill="#fff" text-anchor="middle">C</text>
<circle cx="514" cy="882" r="12" fill="#0f7ed0"/><path d="M505,883Q514,879 522,874Q518,886 505,883Z" fill="#fff"/><path d="M505,888H521" stroke="#fff"/>
<ellipse cx="562" cy="880" rx="9" ry="10" fill="#f4f4f4"/><path d="M558,876h6v6h-6z" fill="#222"/><circle cx="570" cy="888" r="7" fill="#f04a4a"/><text x="570" y="892" font-family="Liberation Sans" font-size="10" font-weight="bold" fill="#fff" text-anchor="middle">2</text>
<path d="M604,871L620,873V892L604,893Z" fill="#6f8aa0"/><rect x="607" y="880" width="15" height="14" fill="#e8eef2"/><path d="M610,884h9M610,887h9M610,890h9" stroke="#345"/>
<rect x="651" y="870" width="21" height="25" fill="#d4a95a" stroke="#a07830"/><path d="M666,870h6v6z" fill="#3a2a10"/><path d="M656,884h4l3,-6M663,884h6M663,878v-5" stroke="#8a4420" stroke-width="1.5" fill="none"/><text x="661" y="892" font-family="Liberation Sans" font-size="6" fill="#6a4010">TTT</text>
<g fill="none" stroke="#fff"><path d="M1339,884L1344,879L1349,884" stroke-width="1.3"/><path d="M1364,877h4v4h-4zM1366,881v3M1368,880h12v8h-12" stroke-width="1.1"/><path d="M1385,887H1400A3,3 0 0 0 1399,881A5,5 0 0 0 1390,880A4,4 0 0 0 1385,887Z" fill="#fff"/><path d="M1411,880h3l4,-4v13l-4,-4h-3zM1421,879q2,3 0,6M1424,877q3,5 0,10" stroke-width="1"/><path d="M1436,889q1,-9 10,-11M1439,890q1,-6 7,-8M1442,890q1,-3 4,-4" stroke-width="1"/><rect x="1457" y="876" width="24" height="12" stroke-width="1"/><path d="M1460,879h18M1460,882h18M1463,885h12" stroke-dasharray="1.500 1" stroke-width="1"/></g>
<g fill="#fff" stroke="none"><path d="M1591,873H1600V886H1591Z"/></g><path d="M1593,877h7M1593,880h7" stroke="#111"/>
</svg>
<div class="t" style="left:1492px;top:875px;color:#fff">FRA</div>
<div class="t" style="left:1530px;top:864px;width:40px;text-align:center;color:#fff">15:50</div>
<div class="t" style="left:1525px;top:882px;width:50px;text-align:center;color:#fff">07-03-17</div>
</body></html>
